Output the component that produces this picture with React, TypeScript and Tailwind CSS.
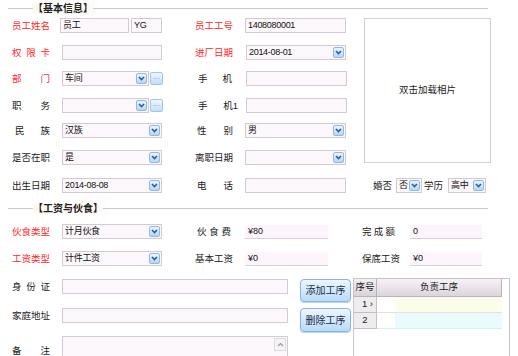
import React from "react";

const FONT = "font-['Liberation_Sans','Noto_Sans_CJK_SC',sans-serif]";

function Label({ parts, red, className = "" }: { parts: string[]; red?: boolean; className?: string }) {
  return (
    <div
      className={`flex shrink-0 justify-between leading-none ${red ? "text-[#ff2a2a]" : "text-[#222]"} ${className}`}
    >
      {parts.map((p, i) => (
        <span key={i}>{p}</span>
      ))}
    </div>
  );
}

function Field({ value = "", className = "" }: { value?: string; className?: string }) {
  return (
    <div
      className={`h-[15px] shrink-0 border border-[#d3cad5] bg-[#fcf7fb] pl-[2px] text-[9px] leading-[13px] tracking-[-0.3px] text-[#111] ${className}`}
    >
      {value}
    </div>
  );
}

function Money({ value, className = "" }: { value: string; className?: string }) {
  return (
    <div
      className={`h-[14px] shrink-0 border-b border-[#d8d0d8] bg-[#fdf5fb] pl-[3px] text-[9px] leading-[13px] text-[#111] ${className}`}
    >
      {value}
    </div>
  );
}

function Arrow() {
  return (
    <div className="flex h-[11px] w-[11px] shrink-0 items-center justify-center rounded-[2px] border border-[#93b9e0] bg-linear-to-b from-[#eaf5ff] to-[#b4d6f6]">
      <svg width="7" height="5" viewBox="0 0 7 5">
        <path d="M1 1 L3.5 3.6 L6 1" stroke="#2b5ca6" strokeWidth="1.6" fill="none" />
      </svg>
    </div>
  );
}

function Select({ value = "", className = "" }: { value?: string; className?: string }) {
  return (
    <div
      className={`flex h-[15px] shrink-0 items-center justify-between border border-[#d3cad5] bg-[#fcf7fb] text-[9px] tracking-[-0.3px] text-[#111] ${className}`}
    >
      <span className="pl-[2px] leading-none">{value}</span>
      <div className="mr-[1px]">
        <Arrow />
      </div>
    </div>
  );
}

function DotsButton() {
  return (
    <div className="ml-[1px] flex h-[13px] w-[13px] shrink-0 items-center justify-center rounded-[2px] border border-[#a4c4e6] bg-linear-to-b from-[#eef6ff] to-[#c4def7] text-[7px] leading-none text-[#5d86bd]">
      ···
    </div>
  );
}

function Legend({ text }: { text: string }) {
  return (
    <div className="ml-[8px] flex h-[11px] w-[480px] items-center">
      <div className="h-px w-[25px] bg-[#c9c9c9]" />
      <span className="bg-[#fffaf5] text-[10px] font-bold leading-none text-[#222]">{text}</span>
      <div className="h-px flex-1 bg-[#c9c9c9]" />
    </div>
  );
}

function Row({ children, className = "" }: { children: React.ReactNode; className?: string }) {
  return <div className={`flex h-[15px] items-center ${className}`}>{children}</div>;
}

function ToolButton({ text, className = "" }: { text: string; className?: string }) {
  return (
    <div
      className={`flex w-[51px] items-center justify-center rounded-[4px] border border-[#86b6e2] bg-linear-to-b from-[#eef7ff] to-[#b9daf7] text-[10px] text-[#1b2f4d] shadow-[0_1px_1px_rgba(120,160,200,0.5)] ${className}`}
    >
      {text}
    </div>
  );
}

export default function App() {
  return (
    <div className={`h-[356px] w-[518px] overflow-hidden bg-white text-[9.5px] ${FONT}`}>
      <div className="pt-[3px]">
        <Legend text="【基本信息】" />
      </div>

      <div className="mt-[4px] flex pl-[12px]">
        <div className="w-[334px]">
          <Row>
            <Label parts={["员", "工", "姓", "名"]} red className="w-[38px]" />
            <Field value="员工" className="ml-[10px] w-[69px]" />
            <Field value="YG" className="ml-[2px] w-[31px]" />
            <Label parts={["员", "工", "工", "号"]} red className="ml-[33px] w-[38px]" />
            <Field value="1408080001" className="ml-[12px] w-[101px]" />
          </Row>
          <Row className="mt-[12px]">
            <Label parts={["权", "限", "卡"]} red className="w-[38px]" />
            <Field className="ml-[12px] w-[100px]" />
            <Label parts={["进", "厂", "日", "期"]} red className="ml-[33px] w-[38px]" />
            <Select value="2014-08-01" className="ml-[13px] w-[100px]" />
          </Row>
          <Row className="mt-[11px]">
            <Label parts={["部", "门"]} red className="w-[38px]" />
            <Select value="车间" className="ml-[12px] w-[87px]" />
            <DotsButton />
            <Label parts={["手", "机"]} className="ml-[33px] w-[36px] pl-[2px]" />
            <Field className="ml-[14px] w-[101px]" />
          </Row>
          <Row className="mt-[12px]">
            <Label parts={["职", "务"]} className="w-[38px]" />
            <Select className="ml-[12px] w-[87px]" />
            <DotsButton />
            <Label parts={["手", "机1"]} className="ml-[33px] w-[42px] pl-[2px]" />
            <Field className="ml-[8px] w-[101px]" />
          </Row>
          <Row className="mt-[10px]">
            <Label parts={["民", "族"]} className="w-[38px] pl-[3px]" />
            <Select value="汉族" className="ml-[12px] w-[100px]" />
            <Label parts={["性", "别"]} className="ml-[33px] w-[38px] pl-[2px]" />
            <Select value="男" className="ml-[12px] w-[101px]" />
          </Row>
          <Row className="mt-[12px]">
            <Label parts={["是", "否", "在", "职"]} className="w-[38px]" />
            <Select value="是" className="ml-[12px] w-[100px]" />
            <Label parts={["离", "职", "日", "期"]} className="ml-[33px] w-[38px]" />
            <Select className="ml-[12px] w-[101px]" />
          </Row>
        </div>
        <div className="ml-[18px] flex h-[145px] w-[127px] items-center justify-center border border-[#d0d0d0] text-[9.5px] text-[#222]">
          双击加载相片
        </div>
      </div>

      <Row className="mt-[13px] pl-[12px]">
        <Label parts={["出", "生", "日", "期"]} className="w-[38px]" />
        <Select value="2014-08-08" className="ml-[12px] w-[100px]" />
        <Label parts={["电", "话"]} className="ml-[33px] w-[38px] pl-[2px]" />
        <Field className="ml-[12px] w-[101px]" />
        <span className="ml-[27px] leading-none text-[#222]">婚否</span>
        <Select value="否" className="ml-[4px] w-[26px]" />
        <span className="ml-[2px] leading-none text-[#222]">学历</span>
        <Select value="高中" className="ml-[5px] w-[38px]" />
      </Row>

      <div className="mt-[10px]">
        <Legend text="【工资与伙食】" />
      </div>

      <div className="pl-[12px]">
        <Row className="mt-[10px]">
          <Label parts={["伙", "食", "类", "型"]} red className="w-[38px]" />
          <Select value="计月伙食" className="ml-[12px] w-[100px]" />
          <Label parts={["伙", "食", "费"]} className="ml-[35px] w-[34px]" />
          <Money value="¥80" className="ml-[14px] w-[83px]" />
          <Label parts={["完", "成", "额"]} className="ml-[34px] w-[33px]" />
          <Money value="0" className="ml-[15px] w-[72px]" />
        </Row>
        <Row className="mt-[12px]">
          <Label parts={["工", "资", "类", "型"]} red className="w-[38px]" />
          <Select value="计件工资" className="ml-[12px] w-[100px]" />
          <Label parts={["基", "本", "工", "资"]} className="ml-[33px] w-[38px]" />
          <Money value="¥0" className="ml-[12px] w-[83px]" />
          <Label parts={["保", "底", "工", "资"]} className="ml-[34px] w-[38px]" />
          <Money value="¥0" className="ml-[10px] w-[72px]" />
        </Row>

        <div className="mt-[12px] flex">
          <div className="w-[276px]">
            <Row className="mt-[1px]">
              <Label parts={["身", "份", "证"]} className="w-[38px]" />
              <Field className="ml-[12px] w-[226px]" />
            </Row>
            <Row className="mt-[14px]">
              <Label parts={["家", "庭", "地", "址"]} className="w-[38px]" />
              <Field className="ml-[12px] w-[226px]" />
            </Row>
            <div className="mt-[13px] flex items-start">
              <Label parts={["备", "注"]} className="mt-[10px] w-[38px]" />
              <div className="ml-[12px] flex h-[30px] w-[226px] justify-end border border-[#d3cad5] bg-[#fcf7fb]">
                <div className="mr-px mt-px flex h-[13px] w-[12px] items-center justify-center border border-[#dcdcdc] bg-[#f4f4f4]">
                  <svg width="7" height="5" viewBox="0 0 7 5">
                    <path d="M1 4 L3.5 1.5 L6 4" stroke="#9a9a9a" strokeWidth="1.2" fill="none" />
                  </svg>
                </div>
              </div>
            </div>
          </div>

          <div className="ml-[12px] flex flex-col">
            <ToolButton text="添加工序" className="mt-[1px] h-[23px]" />
            <ToolButton text="删除工序" className="mt-[6px] h-[24px]" />
          </div>

          <div className="ml-[2px] h-[90px] w-[157px] border border-[#c9c4c9] bg-white text-[9.5px] text-[#222]">
            <div className="flex h-[18px]">
              <div className="flex w-[23px] items-center justify-center border-r border-b border-[#b9b3b9] bg-linear-to-b from-[#f3eff3] to-[#d9d3d9]">
                序号
              </div>
              <div className="flex w-[125px] items-center justify-center border-r border-b border-[#b9b3b9] bg-linear-to-b from-[#f8f2f8] to-[#ddd5dd]">
                负责工序
              </div>
            </div>
            <div className="flex h-[16px]">
              <div className="flex w-[23px] items-center justify-end border-r border-b border-[#c4bfc4] bg-[#efecef] pr-[3px]">
                1 ›
              </div>
              <div className="flex w-[125px] border-b border-[#e2e2d8] bg-[#fbfce9]">
                <div className="w-[18px] bg-white" />
              </div>
            </div>
            <div className="flex h-[16px]">
              <div className="flex w-[23px] items-center justify-center border-r border-b border-[#c4bfc4] bg-[#efecef]">
                2
              </div>
              <div className="flex w-[125px] border-b border-[#d8eef0] bg-[#eafbfd]">
                <div className="w-[18px] bg-white" />
              </div>
            </div>
          </div>
        </div>
      </div>
    </div>
  );
}
